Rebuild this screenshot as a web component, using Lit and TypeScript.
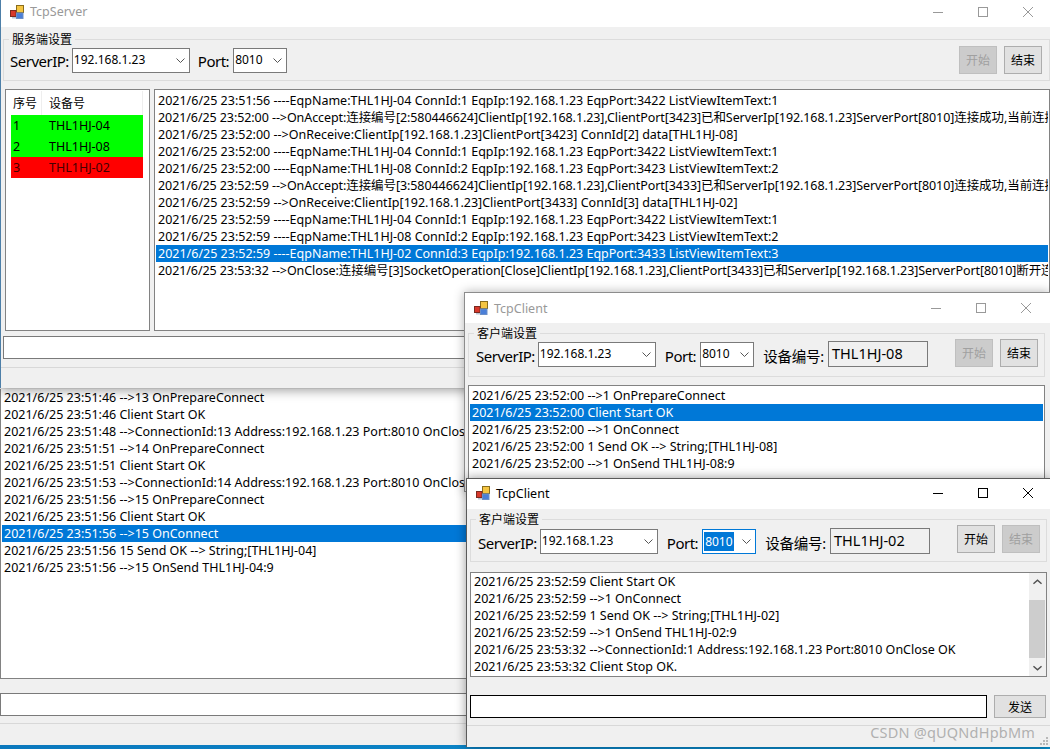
import { LitElement, html, css } from "lit";
import { customElement } from "lit/decorators.js";

const icon = html`<svg class="icon" viewBox="0 0 14 14" width="14" height="14">
  <rect x="6.5" y="0.5" width="7" height="7" fill="#f5c542" stroke="#8a6d1c"/>
  <rect x="0.5" y="5.5" width="5.5" height="6" fill="#d8382b" stroke="#7a2a20"/>
  <rect x="6.5" y="8" width="6.5" height="5.5" fill="#4a7fd8" stroke="#6b8fc8"/>
  <rect x="2" y="12" width="4" height="1.5" fill="#b9c4d4"/>
</svg>`;

const chevron = html`<svg class="chev" viewBox="0 0 9 5" width="9" height="5"><path d="M0.5 0.5 L4.5 4.5 L8.5 0.5" fill="none" stroke="#555" stroke-width="1"/></svg>`;

function titleBar(title: string, active: boolean) {
  return html`<div class="titlebar ${active ? "active" : ""}">
    ${icon}<span class="title">${title}</span><span class="spring"></span>
    <svg class="ctl" viewBox="0 0 10 10" width="10" height="10"><path d="M0 5.5H10" fill="none" stroke="currentColor"/></svg>
    <svg class="ctl" viewBox="0 0 10 10" width="10" height="10"><rect x="0.5" y="0.5" width="9" height="9" fill="none" stroke="currentColor"/></svg>
    <svg class="ctl" viewBox="0 0 10 10" width="10" height="10"><path d="M0 0L10 10M10 0L0 10" fill="none" stroke="currentColor"/></svg>
  </div>`;
}

function combo(value: string, cls: string, focused = false) {
  return html`<div class="combo ${cls} ${focused ? "focused" : ""}"><span class="val"><span class="txt">${value}</span></span>${chevron}</div>`;
}

const hasCjk = /[\u4e00-\u9fff]/;

function rows(lines: string[], selected = -1) {
  return lines.map((l, i) => html`<div class="row ${i === selected ? "sel" : ""} ${hasCjk.test(l) ? "long" : ""}">${l}</div>`);
}

const serverLog = [
  "2021/6/25 23:51:56 ----EqpName:THL1HJ-04 ConnId:1 EqpIp:192.168.1.23 EqpPort:3422 ListViewItemText:1",
  "2021/6/25 23:52:00 -->OnAccept:连接编号[2:580446624]ClientIp[192.168.1.23],ClientPort[3423]已和ServerIp[192.168.1.23]ServerPort[8010]连接成功,当前连接数2",
  "2021/6/25 23:52:00 -->OnReceive:ClientIp[192.168.1.23]ClientPort[3423] ConnId[2] data[THL1HJ-08]",
  "2021/6/25 23:52:00 ----EqpName:THL1HJ-04 ConnId:1 EqpIp:192.168.1.23 EqpPort:3422 ListViewItemText:1",
  "2021/6/25 23:52:00 ----EqpName:THL1HJ-08 ConnId:2 EqpIp:192.168.1.23 EqpPort:3423 ListViewItemText:2",
  "2021/6/25 23:52:59 -->OnAccept:连接编号[3:580446624]ClientIp[192.168.1.23],ClientPort[3433]已和ServerIp[192.168.1.23]ServerPort[8010]连接成功,当前连接数3",
  "2021/6/25 23:52:59 -->OnReceive:ClientIp[192.168.1.23]ClientPort[3433] ConnId[3] data[THL1HJ-02]",
  "2021/6/25 23:52:59 ----EqpName:THL1HJ-04 ConnId:1 EqpIp:192.168.1.23 EqpPort:3422 ListViewItemText:1",
  "2021/6/25 23:52:59 ----EqpName:THL1HJ-08 ConnId:2 EqpIp:192.168.1.23 EqpPort:3423 ListViewItemText:2",
  "2021/6/25 23:52:59 ----EqpName:THL1HJ-02 ConnId:3 EqpIp:192.168.1.23 EqpPort:3433 ListViewItemText:3",
  "2021/6/25 23:53:32 -->OnClose:连接编号[3]SocketOperation[Close]ClientIp[192.168.1.23],ClientPort[3433]已和ServerIp[192.168.1.23]ServerPort[8010]断开连接",
];

const backLog = [
  "2021/6/25 23:51:46 -->13 OnPrepareConnect",
  "2021/6/25 23:51:46 Client Start OK",
  "2021/6/25 23:51:48 -->ConnectionId:13 Address:192.168.1.23 Port:8010 OnClose OK",
  "2021/6/25 23:51:51 -->14 OnPrepareConnect",
  "2021/6/25 23:51:51 Client Start OK",
  "2021/6/25 23:51:53 -->ConnectionId:14 Address:192.168.1.23 Port:8010 OnClose OK",
  "2021/6/25 23:51:56 -->15 OnPrepareConnect",
  "2021/6/25 23:51:56 Client Start OK",
  "2021/6/25 23:51:56 -->15 OnConnect",
  "2021/6/25 23:51:56 15 Send OK --> String;[THL1HJ-04]",
  "2021/6/25 23:51:56 -->15 OnSend THL1HJ-04:9",
];

const c1Log = [
  "2021/6/25 23:52:00 -->1 OnPrepareConnect",
  "2021/6/25 23:52:00 Client Start OK",
  "2021/6/25 23:52:00 -->1 OnConnect",
  "2021/6/25 23:52:00 1 Send OK --> String;[THL1HJ-08]",
  "2021/6/25 23:52:00 -->1 OnSend THL1HJ-08:9",
];

const c2Log = [
  "2021/6/25 23:52:59 Client Start OK",
  "2021/6/25 23:52:59 -->1 OnConnect",
  "2021/6/25 23:52:59 1 Send OK --> String;[THL1HJ-02]",
  "2021/6/25 23:52:59 -->1 OnSend THL1HJ-02:9",
  "2021/6/25 23:53:32 -->ConnectionId:1 Address:192.168.1.23 Port:8010 OnClose OK",
  "2021/6/25 23:53:32 Client Stop OK.",
];

function clientSettings(device: string, startOff: boolean, focused: boolean) {
  return html`<fieldset class="group client-group">
    <legend>客户端设置</legend>
    <span class="lbl">ServerIP:</span>
    ${combo("192.168.1.23", "ip")}
    <span class="lbl port">Port:</span>
    ${combo("8010", "pt", focused)}
    <span class="lbl dev">设备编号:</span>
    <div class="devbox">${device}</div>
    <span class="spring"></span>
    <div class="btn ${startOff ? "off" : ""}">开始</div>
    <div class="btn ${startOff ? "" : "off"}">结束</div>
  </fieldset>`;
}

@customElement("app-root")
export class AppRoot extends LitElement {
  static styles = css`
    :host { display: block; width: 1050px; height: 749px; position: relative; overflow: hidden; background: #fff;
      font-family: "Noto Sans", "Noto Sans CJK SC", sans-serif; font-size: 12.5px; color: #000; }
    .taskbar { position: absolute; left: 0; right: 0; top: 745px; height: 4px; background: linear-gradient(90deg, #0b78bd, #0a90cf); }
    .win { position: absolute; background: #f0f0f0; display: flex; flex-direction: column; box-sizing: border-box; overflow: hidden; }
    .back { left: 0; top: 380px; width: 480px; height: 365px; }
    .server { left: 0; top: 0; width: 1050px; height: 388px; border-left: 1px solid #4d7fa8; box-shadow: 0 3px 10px rgba(0,0,0,.35); }
    .c1 { left: 464px; top: 292px; width: 586px; height: 200px; border: 1px solid #8c8c8c; border-right: 0; box-shadow: 0 0 10px rgba(0,0,0,.3); }
    .c2 { left: 466px; top: 478px; width: 584px; height: 269px; border: 1px solid #5a5a5a; border-right: 0; border-bottom: 0; box-shadow: 0 0 10px rgba(0,0,0,.4); }

    .titlebar { height: 27px; flex: none; background: #fff; display: flex; align-items: center; padding-left: 9px; color: #999; box-sizing: border-box; }
    .server .titlebar { padding-bottom: 4px; }
    .c1 .titlebar, .c2 .titlebar { height: 30px; }
    .c2 .titlebar { padding-bottom: 2px; }
    .titlebar.active { color: #000; }
    .icon { flex: none; margin-right: 6px; }
    .title { font-size: 12.5px; }
    .spring { flex: 1; }
    .ctl { flex: none; margin-right: 35px; }
    .ctl:last-child { margin-right: 17px; }
    .c1 .ctl:last-child { margin-right: 19px; }

    .group { margin: 0; padding: 0; border: 1px solid #dcdcdc; display: flex; align-items: center; box-sizing: border-box; min-width: 0; }
    legend { padding: 0 3px; font-size: 12px; line-height: 14px; position: relative; top: 1px; }
    .server-group { margin: 5px 0 0 2px; height: 49px; padding: 0 7px 0 6px; }
    .server-group legend { margin-left: -1px; }
    .client-group { margin: 3px 5px 0 3px; height: 51px; padding: 0 6px 0 7px; }
    .c2 .client-group { margin-right: 3px; height: 50px; padding-top: 1px; }
    .client-group legend { margin-left: -2px; }
    .lbl { font-size: 15px; white-space: nowrap; letter-spacing: -0.5px; line-height: 24px; padding-top: 2px; }
    .client-group .lbl { padding-top: 4px; }
    .combo { height: 25px; box-sizing: border-box; border: 1px solid #7a7a7a; background: #fff; display: flex; align-items: center; padding: 0 4px 0 1px; margin-left: 3px; }
    .combo .val { flex: 1; font-size: 12px; position: relative; top: -1px; }
    .combo.ip { width: 118px; }
    .combo.pt { width: 54px; margin-left: 4px; }
    .port { margin-left: 8px; }
    .client-group .port { margin-left: 9px; }
    .dev { margin-left: 9px; font-size: 14.5px; letter-spacing: -0.2px; }
    .devbox { width: 100px; height: 26px; box-sizing: border-box; border: 1px solid #7a7a7a; background: #f0f0f0; margin-left: 4px; padding-left: 3px; font-size: 14.5px; line-height: 23px; }
    .combo.focused { border-color: #0078d7; }
    .combo.focused .txt { display: inline-block; background: #0078d7; color: #fff; height: 19px; line-height: 19px; padding: 0 1px; position: relative; top: 1px; }
    .btn { width: 38px; height: 28px; box-sizing: border-box; border: 1px solid #adadad; background: #e1e1e1; display: flex; align-items: center; justify-content: center; font-size: 12px; margin-left: 7px; position: relative; }
    .client-group .btn { top: -1px; }
    .c2 .client-group .btn { top: -2px; }
    .btn.off { background: #ccc; border-color: #bfbfbf; color: #a0a0a0; }

    .list { background: #fff; border: 1px solid #828282; box-sizing: border-box; overflow: hidden; }
    .row { height: 17px; line-height: 17px; padding: 0 2px; white-space: nowrap; overflow: hidden; font-size: 12.5px; }
    .row.long { letter-spacing: -0.08px; }
    .row.sel { background: #0078d7; color: #fff; }

    .server-main { display: flex; gap: 4px; margin: 8px 0 0 4px; height: 242px; flex: none; }
    .devices { width: 145px; flex: none; padding: 1px 6px 0 5px; box-sizing: border-box; }
    .dhead { display: grid; grid-template-columns: 31px 1fr; height: 24px; align-items: center; font-size: 12px; border-right: 1px solid #eee; width: 132px; box-sizing: border-box; }
    .dhead span { padding-left: 2px; height: 100%; display: flex; align-items: center; box-sizing: border-box; }
    .dhead span:first-child { border-right: 1px solid #eee; }
    .dhead span:last-child { padding-left: 7px; }
    .drow { display: grid; grid-template-columns: 31px 1fr; height: 21px; line-height: 21px; padding-left: 2px; width: 132px; box-sizing: border-box; font-size: 12.5px; }
    .drow span:last-child { padding-left: 5px; }
    .green { background: #0f0; }
    .red { background: #f00; color: #400; }
    .log { flex: 1; min-width: 0; padding: 2px 1px 0 1px; }
    .log .row { padding: 0 2px; }

    .input { background: #fff; border: 1px solid #7a7a7a; box-sizing: border-box; height: 23px; flex: none; }
    .foot { flex: none; border-top: 1px solid #d8d8d8; }

    .server .input { margin: 5px 0 0 2px; }
    .server .foot { margin: 8px 0 0 0; flex: 1; }

    .back .list { height: 290px; margin-top: 9px; flex: none; padding: 0 0 0 1px; border-top: 0; }
    .back .input { margin-top: 14px; }
    .back .foot { margin-top: 7px; flex: 1; }

    .c1 .list { height: 100px; margin: 8px 5px 0 3px; flex: none; padding: 1px 1px 0 1px; }
    .c2 .list { height: 105px; margin: 10px 3px 0 3px; flex: none; display: flex; padding: 0 0 0 1px; }
    .c2 .lines { flex: 1; padding-top: 0; min-width: 0; }
    .sb { width: 17px; flex: none; background: #f0f0f0; display: flex; flex-direction: column; align-items: center; margin: 0; padding-right: 1px; box-sizing: border-box; }
    .sb .arr { height: 17px; flex: none; display: flex; align-items: center; justify-content: center; }
    .sb .track { flex: 1; padding-top: 10px; width: 100%; box-sizing: border-box; }
    .sb .thumb { width: 100%; height: 58px; background: #cdcdcd; }
    .sendline { display: flex; gap: 7px; margin: 18px 4px 0 3px; flex: none; align-items: center; }
    .sendline .input { flex: 1; border-color: #000; margin: 0; }
    .sendline .btn { width: 52px; height: 23px; margin: 0; top: 0; }
    .c2 .foot { margin-top: 7px; flex: 1; display: flex; justify-content: flex-end; align-items: flex-start; padding-right: 15px; position: relative; }
    .mark { color: #b0b0b0; font-size: 14.5px; letter-spacing: .2px; line-height: 14px; position: relative; top: -1px; }
    .grip { position: absolute; right: 1px; bottom: 1px; }
  `;

  render() {
    return html`
      <div class="taskbar"></div>

      <div class="win back">
        <div class="list">${rows(backLog, 8)}</div>
        <div class="input"></div>
        <div class="foot"></div>
      </div>

      <div class="win server">
        ${titleBar("TcpServer", false)}
        <fieldset class="group server-group">
          <legend>服务端设置</legend>
          <span class="lbl">ServerIP:</span>
          ${combo("192.168.1.23", "ip")}
          <span class="lbl port">Port:</span>
          ${combo("8010", "pt")}
          <span class="spring"></span>
          <div class="btn off">开始</div>
          <div class="btn">结束</div>
        </fieldset>
        <div class="server-main">
          <div class="list devices">
            <div class="dhead"><span>序号</span><span>设备号</span></div>
            <div class="drow green"><span>1</span><span>THL1HJ-04</span></div>
            <div class="drow green"><span>2</span><span>THL1HJ-08</span></div>
            <div class="drow red"><span>3</span><span>THL1HJ-02</span></div>
          </div>
          <div class="list log">${rows(serverLog, 9)}</div>
        </div>
        <div class="input"></div>
        <div class="foot"></div>
      </div>

      <div class="win c1">
        ${titleBar("TcpClient", false)}
        ${clientSettings("THL1HJ-08", true, false)}
        <div class="list">${rows(c1Log, 1)}</div>
      </div>

      <div class="win c2">
        ${titleBar("TcpClient", true)}
        ${clientSettings("THL1HJ-02", false, true)}
        <div class="list">
          <div class="lines">${rows(c2Log)}</div>
          <div class="sb">
            <div class="arr"><svg viewBox="0 0 10 6" width="9" height="6"><path d="M0.5 5L5 1L9.5 5" fill="none" stroke="#505050" stroke-width="1.6"/></svg></div>
            <div class="track"><div class="thumb"></div></div>
            <div class="arr"><svg viewBox="0 0 10 6" width="9" height="6"><path d="M0.5 1L5 5L9.5 1" fill="none" stroke="#505050" stroke-width="1.6"/></svg></div>
          </div>
        </div>
        <div class="sendline">
          <div class="input"></div>
          <div class="btn">发送</div>
        </div>
        <div class="foot">
          <span class="mark">CSDN @qUQNdHpbMm</span>
          <svg class="grip" viewBox="0 0 10 10" width="10" height="10">
            <g fill="#b8b8b8"><rect x="7" y="1" width="2" height="2"/><rect x="4" y="4" width="2" height="2"/><rect x="7" y="4" width="2" height="2"/><rect x="1" y="7" width="2" height="2"/><rect x="4" y="7" width="2" height="2"/><rect x="7" y="7" width="2" height="2"/></g>
          </svg>
        </div>
      </div>
    `;
  }
}
